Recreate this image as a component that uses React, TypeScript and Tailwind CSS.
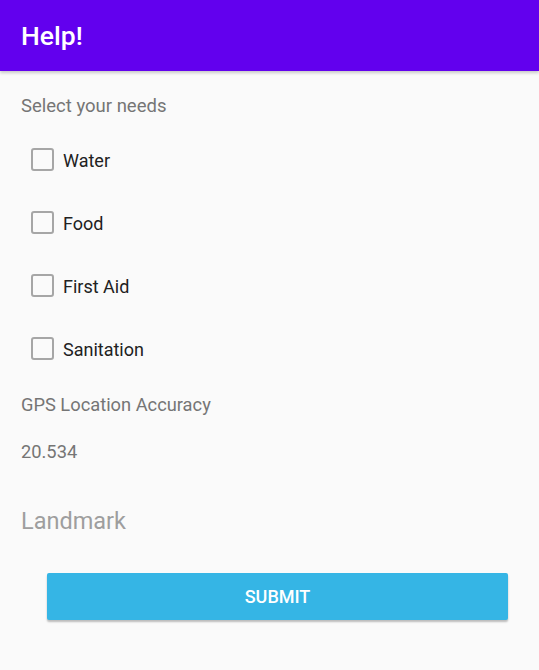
const needs = ['Water', 'Food', 'First Aid', 'Sanitation']

const App: React.FC = () => {
  return (
    <div className="h-[670px] w-full bg-[#fafafa] font-['Roboto',sans-serif]">
      <header className="flex h-[71px] items-center bg-[#6200ee] px-[21px] shadow-[0_2px_3px_rgba(0,0,0,0.2)]">
        <h1 className="text-[26.5px] font-medium text-white">Help!</h1>
      </header>
      <main className="px-[21px]">
        <p className="mt-[24px] text-[18.5px] leading-[22px] text-[#757575]">Select your needs</p>
        <ul className="mt-[32px]">
          {needs.map((n) => (
            <li key={n} className="flex h-[63px] items-start pl-[10px]">
              <span className="mt-[-1px] block h-[23px] w-[23px] shrink-0 rounded-[3px] border-[2.5px] border-[#a6a6a6]" />
              <span className="ml-[9px] text-[18px] leading-[24px] text-[#212121]">{n}</span>
            </li>
          ))}
        </ul>
        <p className="mt-[-7px] text-[18.3px] leading-[22px] text-[#757575]">GPS Location Accuracy</p>
        <p className="mt-[25px] text-[18.3px] leading-[22px] text-[#757575]">20.534</p>
        <p className="mt-[44px] text-[23.5px] leading-[28px] text-[#9e9e9e]">Landmark</p>
        <button className="ml-[26px] mt-[38px] h-[47px] w-[461px] rounded-[2px] bg-[#35b5e5] text-[18px] font-medium text-white shadow-[0_2px_2px_rgba(0,0,0,0.25)]">
          SUBMIT
        </button>
      </main>
    </div>
  )
}

export default App
